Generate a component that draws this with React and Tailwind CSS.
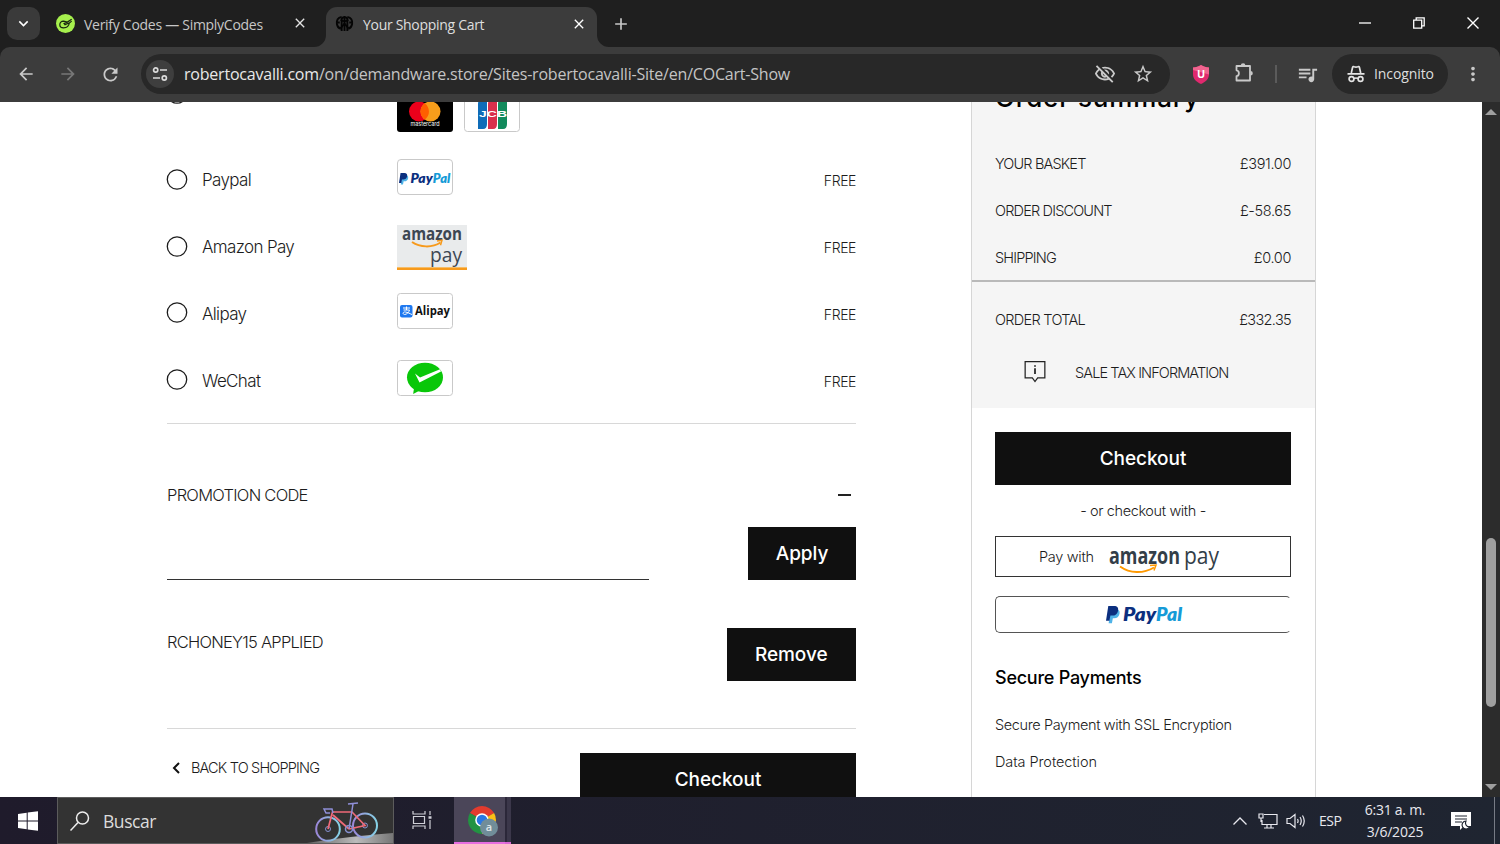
import {
    MdAdd,
    MdArrowBack,
    MdArrowForward,
    MdClose,
    MdKeyboardArrowDown,
    MdMoreVert,
    MdOutlineVisibilityOff,
    MdQueueMusic,
    MdRefresh,
    MdStarBorder,
} from "react-icons/md";

const PayPalMark = () => (
    <>
        <path d="M6 4h7c4 0 5.500 2 4.800 5.500-.9 4-3.500 5.500-7 5.500H9l-1.200 6H3.500z" fill="#4fb3e8" />
        <path d="M3 0h7.500c4.500 0 6.200 2.300 5.300 6-.9 4-3.600 5.700-7.600 5.700H5.800L4.500 18H0z" fill="#0b2f7f" />
    </>
);

const PayPalLogo = ({ className }) => (
    <svg viewBox="0 0 77 18" className={`overflow-visible ${className}`}>
        <g transform="scale(.76 .82)">
            <PayPalMark />
        </g>
        <text
            x="17"
            y="14.500"
            fontSize="18"
            fontWeight="800"
            fontStyle="italic"
            fontFamily="Lato, sans-serif"
            textLength="33"
            lengthAdjust="spacingAndGlyphs"
            fill="#0b2f7f"
        >
            Pay
        </text>
        <text
            x="50"
            y="14.500"
            fontSize="18"
            fontWeight="800"
            fontStyle="italic"
            fontFamily="Lato, sans-serif"
            textLength="26"
            lengthAdjust="spacingAndGlyphs"
            fill="#169bd7"
        >
            Pal
        </text>
    </svg>
);

const MastercardLogo = () => (
    <svg viewBox="0 0 56 36" className="h-9 w-14">
        <rect width="56" height="36" rx="3" fill="#000" />
        <circle cx="22" cy="15.500" r="10" fill="#eb001b" />
        <circle cx="33.500" cy="15.500" r="10" fill="#f79e1b" />
        <path d="M27.700 7.300a10 10 0 0 1 0 16.400 10 10 0 0 1 0-16.400z" fill="#ff5f00" />
        <text x="13.500" y="30" fontSize="5.500" fontFamily="Inter, sans-serif" textLength="29" lengthAdjust="spacingAndGlyphs" fill="#fff">
            mastercard
        </text>
    </svg>
);

const JcbLogo = () => (
    <svg viewBox="0 0 56 36" className="h-9 w-14">
        <rect x=".5" y=".5" width="55" height="35" rx="3" fill="#fff" stroke="#c9c9c9" />
        <path d="M14 8q0-5 5-5h4v25q0 5-4 5h-5z" fill="#0f6cb8" />
        <path d="M24 8q0-5 5-5h4v25q0 5-4 5h-5z" fill="#d9304c" />
        <path d="M34 8q0-5 5-5h4v25q0 5-4 5h-5z" fill="#128a5c" />
        <text x="15" y="21" fontSize="8.500" fontWeight="700" fontFamily="Liberation Sans, sans-serif" textLength="28" lengthAdjust="spacingAndGlyphs" fill="#fff">
            JCB
        </text>
    </svg>
);

const PayPalCard = () => (
    <div className="flex h-9 w-14 items-center justify-center rounded border border-[#c9c9c9] bg-white pt-1">
        <PayPalLogo className="h-[18px] w-[52px]" />
    </div>
);

const AmazonCard = () => (
    <svg viewBox="0 0 70 45" className="mt-1.5 h-[45px] w-[70px] overflow-visible">
        <rect width="70" height="45" fill="#e9ebec" />
        <rect y="42" width="70" height="1" fill="#f5bd68" />
        <rect y="43" width="70" height="2" fill="#f79a1c" />
        <text x="5" y="15" fontSize="18" fontWeight="700" fontFamily="Open Sans, sans-serif" textLength="60" lengthAdjust="spacingAndGlyphs" fill="#3d4753">
            amazon
        </text>
        <path d="M15 17c8 5.500 20 6 28.500.5" fill="none" stroke="#f79a1c" strokeWidth="2" />
        <path d="M40 16l5-.8-1.500 5" fill="none" stroke="#f79a1c" strokeWidth="1.500" />
        <text x="33" y="36.500" fontSize="20" fontFamily="Open Sans, sans-serif" fontWeight="500" textLength="32" lengthAdjust="spacingAndGlyphs" fill="#3d4753">
            pay
        </text>
    </svg>
);

const AlipayCard = () => (
    <svg viewBox="0 0 56 36" className="h-9 w-14 overflow-visible">
        <rect x=".5" y=".5" width="55" height="35" rx="3" fill="#fff" stroke="#c9c9c9" />
        <rect x="3" y="12" width="12.500" height="12.500" rx="2" fill="#1e78f0" />
        <path d="M6 15h7M9.500 13.500v3.500M6.500 17h6c-.5 2-2.500 4.500-5 4.500-2.500-.5-1.500-3 1-2.500 2 .3 4 1.500 6.500 2.500" fill="none" stroke="#fff" strokeWidth="1" />
        <text x="18" y="22" fontSize="13" fontWeight="700" fontFamily="Open Sans, sans-serif" textLength="35" lengthAdjust="spacingAndGlyphs" fill="#111">
            Alipay
        </text>
    </svg>
);

const WeChatCard = () => (
    <svg viewBox="0 0 56 36" className="h-9 w-14">
        <rect x=".5" y=".5" width="55" height="35" rx="3" fill="#fff" stroke="#c9c9c9" />
        <ellipse cx="28" cy="17.500" rx="18" ry="14.800" fill="#09c709" />
        <path d="M17 28l-.8 6 6.500-3.500z" fill="#09c709" />
        <path d="M18 13.500l5 4L43 9.300 44 11.500l-21.500 11z" fill="#fff" />
    </svg>
);

const payments = [
    { name: "Paypal", logo: <PayPalCard /> },
    { name: "Amazon Pay", logo: <AmazonCard /> },
    { name: "Alipay", logo: <AlipayCard /> },
    { name: "WeChat", logo: <WeChatCard /> },
];

const totals = [
    ["YOUR BASKET", "£391.00"],
    ["ORDER DISCOUNT", "£-58.65"],
    ["SHIPPING", "£0.00"],
];

const TabStrip = () => (
    <div className="flex h-[47px] shrink-0 bg-[#1f1f1f] text-[#c7c7c7]">
        <div className="ml-[7px] mt-[7px] flex h-[33px] w-[33px] items-center justify-center rounded-[10px] bg-[#3a3a3a]">
            <MdKeyboardArrowDown className="size-[19px] text-white" />
        </div>
        <div className="ml-4 flex h-[47px] w-[270px] items-center pb-px">
            <svg viewBox="0 0 20 20" className="size-[19px]">
                <circle cx="10" cy="10" r="10" fill="#a6f04d" />
                <path d="M16.500 5.500L12 8.500 8 7.500C5.500 7.500 4 9 4 11.200 4 13.200 5.500 14.500 8 14.500c3 0 5.500-1.500 6-5l2.500-2M12 8.500L8.500 10l1 1.300 4-1.800" fill="none" stroke="#182610" strokeWidth="1.300" />
            </svg>
            <span className="ml-[9px] w-[208px] whitespace-nowrap pt-0.5 text-[14px] tracking-[-0.28px]">
                Verify Codes — SimplyCodes
            </span>
            <MdClose className="size-4 text-[#e3e3e3]" />
        </div>
        <div className="relative mt-[7px] flex h-10 w-[271px] items-center rounded-t-[11px] bg-[#3c3c3c] pb-[7px]">
            <svg viewBox="0 0 12 12" className="absolute -left-3 bottom-0 size-3">
                <path d="M12 0A12 12 0 0 1 0 12h12z" fill="#3c3c3c" />
            </svg>
            <svg viewBox="0 0 12 12" className="absolute -right-3 bottom-0 size-3">
                <path d="M0 0a12 12 0 0 0 12 12H0z" fill="#3c3c3c" />
            </svg>
            <svg viewBox="0 0 20 20" className="ml-[9px] size-[19px]">
                <g fill="none" stroke="#050505" strokeWidth="2">
                    <path d="M7 3C3 4 1.500 7 2 10.500c.5 3 2 4.500 4 5M13 3c4 1 5.500 4 5 7.500-.5 3-2 4.500-4 5" />
                    <path d="M7 18V5q3-4 6 0v13M1 9h4M15 9h4M10 2v16" />
                    <path d="M6 6q4 3 8 0M6 15l4-5 4 5" />
                </g>
            </svg>
            <span className="ml-[9px] w-[208px] whitespace-nowrap pt-0.5 text-[14px] tracking-[-0.3px] text-[#dedede]">
                Your Shopping Cart
            </span>
            <MdClose className="size-4 text-white" />
        </div>
        <MdAdd className="ml-[14px] mt-[14px] size-5" />
        <div className="ml-auto mr-[21px] flex items-center gap-[42px] pb-px text-white">
            <svg viewBox="0 0 12 12" className="size-3">
                <path d="M0 6h12" stroke="currentColor" strokeWidth="1.300" />
            </svg>
            <svg viewBox="0 0 12 12" className="size-3" fill="none" stroke="currentColor" strokeWidth="1.300">
                <path d="M.7 3.200h8v8h-8zM3.200 3V.8h8v8H9" />
            </svg>
            <svg viewBox="0 0 12 12" className="size-3">
                <path d="M.5.5l11 11M11.500.5l-11 11" stroke="currentColor" strokeWidth="1.400" />
            </svg>
        </div>
    </div>
);

const Toolbar = () => (
    <div className="h-[55px] shrink-0 bg-[#1f1f1f]">
        <div className="flex h-[55px] items-center rounded-t-[10px] bg-[#3c3c3c] pb-px text-[#c9c9c9]">
            <MdArrowBack className="ml-4 size-5" />
            <MdArrowForward className="ml-[22px] size-5 text-[#777]" />
            <MdRefresh className="ml-[22px] size-[21px]" />
            <div className="ml-5 flex h-10 w-[1029px] items-center rounded-full bg-[#282828]">
                <div className="ml-[5px] flex size-7 items-center justify-center rounded-full bg-[#3e3e3e]">
                    <svg viewBox="0 0 16 16" className="size-4" fill="none" stroke="#dcdcdc" strokeWidth="1.700">
                        <circle cx="3.700" cy="4" r="2.100" />
                        <path d="M8 4h7M1 12h7" />
                        <circle cx="12.300" cy="12" r="2.100" />
                    </svg>
                </div>
                <p className="ml-[10px] w-[910px] whitespace-nowrap text-[16px] tracking-[-0.21px] text-[#c4c4c4]">
                    <span className="text-[#e8e8e8]">robertocavalli.com</span>
                    /on/demandware.store/Sites-robertocavalli-Site/en/COCart-Show
                </p>
                <MdOutlineVisibilityOff className="size-[22px]" />
                <MdStarBorder className="ml-4 size-[22px]" />
            </div>
            <svg viewBox="0 0 16 19" className="ml-[23px] h-[19px] w-4">
                <path d="M8 0c2.500 1.800 5 2.300 8 2.500v7c0 4.500-3.500 7.500-8 9.500-4.500-2-8-5-8-9.500v-7C3 2.300 5.500 1.800 8 0z" fill="#e0296e" />
                <path d="M8 0c2.500 1.800 5 2.300 8 2.500v7L0 5V2.500C3 2.300 5.500 1.800 8 0z" fill="#f0648f" />
                <text x="8" y="13" textAnchor="middle" fontSize="10.500" fontWeight="700" fontFamily="Inter, sans-serif" fill="#fff">
                    U
                </text>
            </svg>
            <svg viewBox="0 0 22 22" className="mb-1 ml-6 size-[22px]" fill="none" stroke="currentColor" strokeWidth="1.800">
                <path d="M3.500 5H17v14.500H3.500v-4.300c3.200-.4 3.200-5.500 0-5.900z" strokeLinejoin="round" />
                <path d="M7.800 4.500a2.300 2.300 0 0 1 4.600 0zM17.500 9.900a2.300 2.300 0 0 1 0 4.600z" fill="currentColor" stroke="none" />
            </svg>
            <div className="ml-5 h-[18px] w-[2px] bg-[#5b5b5b]" />
            <MdQueueMusic className="ml-[19px] size-[23px]" />
            <div className="ml-[13px] flex h-10 w-[116px] items-center rounded-full bg-[#282828] text-[#dedede]">
                <svg viewBox="0 0 18 18" className="ml-[15px] size-[18px]" fill="none" stroke="#e4e4e4" strokeWidth="1.700">
                    <path d="M4.300 8L5.600 2.300Q6 1.200 7.200 1.700q1.800.7 3.600 0 1.200-.5 1.600.6L13.700 8M.5 8.800h17" />
                    <circle cx="4.500" cy="14" r="2.400" />
                    <circle cx="13.500" cy="14" r="2.400" />
                    <path d="M6.800 13.500q2.200-1 4.400 0" />
                </svg>
                <span className="ml-[9px] pb-0.5 text-[14px] tracking-[-0.1px]">Incognito</span>
            </div>
            <MdMoreVert className="ml-[14px] size-[22px]" />
        </div>
    </div>
);

const Radio = ({ className = "" }) => (
    <svg viewBox="0 0 21 21" className={`size-[21px] shrink-0 ${className}`}>
        <circle cx="10" cy="10.500" r="9.700" fill="none" stroke="#1c1c1c" strokeWidth="1.300" />
    </svg>
);

const BlackButton = ({ children, className }) => (
    <button className={`flex h-[53px] items-center justify-center bg-[#101010] pt-[2px] text-[19px] font-medium tracking-[-0.05px] text-white ${className}`}>
        {children}
    </button>
);

const Cart = () => (
    <main className="ml-[167px] w-[689px] text-[#1c1c1c]">
        <div className="flex h-11 items-end overflow-hidden pb-[14px]">
            <Radio className="mb-[28px] overflow-visible" />
            <div className="ml-[209px] flex gap-[11px]">
                <MastercardLogo />
                <JcbLogo />
            </div>
        </div>
        {payments.map(({ name, logo }) => (
            <div key={name} className="flex h-[66.8px] items-center">
                <Radio className="overflow-visible" />
                <span className="ml-[14px] w-[195px] pt-[3px] text-[17px] font-light tracking-[-0.65px]">{name}</span>
                <div className="pb-1">{logo}</div>
                <span className="ml-auto pt-[3px] text-[14px] font-light tracking-[-0.4px]">FREE</span>
            </div>
        ))}
        <div className="mt-[9.5px] border-t border-[#d8d8d8]" />
        <div className="mt-[59.500px] flex h-6 items-center justify-between pr-[5px]">
            <h3 className="text-[16.5px] font-light tracking-[-0.73px]">PROMOTION CODE</h3>
            <span className="h-[2px] w-[13px] bg-[#222]" />
        </div>
        <div className="mt-5 flex items-end justify-between">
            <input className="h-[53px] w-[482px] border-b border-[#333] outline-none" />
            <BlackButton className="w-[108px]">Apply</BlackButton>
        </div>
        <div className="mt-[47.500px] flex justify-between">
            <p className="pt-[2px] text-[16.5px] font-light tracking-[-0.75px]">RCHONEY15 APPLIED</p>
            <BlackButton className="w-[129.5px]">Remove</BlackButton>
        </div>
        <div className="mt-[47.500px] border-t border-[#d8d8d8]" />
        <div className="mt-[23.500px] flex justify-between">
            <a className="flex h-[30px] items-center text-[14.5px] font-light tracking-[-0.82px]">
                <svg viewBox="0 0 8 12" className="ml-[5px] mr-[11px] h-3 w-2" fill="none" stroke="#111" strokeWidth="2">
                    <path d="M7 1L2 6l5 5" />
                </svg>
                BACK TO SHOPPING
            </a>
            <BlackButton className="w-[276px]">Checkout</BlackButton>
        </div>
    </main>
);

const OrderSummary = () => (
    <aside className="ml-[115px] h-[695px] w-[345px] border-x border-[#d6d6d6] text-[#1c1c1c]">
        <div className="h-[306px] bg-[#f5f5f5]">
            <div className="flex h-[38px] items-start px-[23px]">
                <h2 className="-mt-[22px] whitespace-nowrap text-[26px] leading-9 font-medium tracking-[0.85px] text-black">
                    Order summary
                </h2>
            </div>
            <div className="h-[142px] border-b-2 border-[#b9b9b9] text-[14.5px] font-light">
                {totals.map(([label, amount]) => (
                    <div key={label} className="flex h-[47px] items-center justify-between pl-[23px] pr-6">
                        <span className="tracking-[-0.83px]">{label}</span>
                        <span className="tracking-[-0.35px]">{amount}</span>
                    </div>
                ))}
            </div>
            <div className="mt-3.5 flex h-[47px] items-center justify-between pl-[23px] pr-6 text-[14.5px] font-light">
                <span className="tracking-[-0.7px]">ORDER TOTAL</span>
                <span className="tracking-[-0.65px]">£332.35</span>
            </div>
            <div className="mt-[5px] flex h-[47px] items-center pl-[52px]">
                <svg viewBox="0 0 22 23" className="size-[22px]" fill="none" stroke="#222" strokeWidth="1.300">
                    <path d="M.7.700h20.600v17h-7.500L11 21.500l-2.800-3.800H.7z" />
                    <path d="M11 7.500v6M11 4.500v1.500" strokeWidth="1.800" />
                </svg>
                <span className="ml-[29px] pt-0.5 text-[14.5px] font-light tracking-[-0.9px]">SALE TAX INFORMATION</span>
            </div>
        </div>
        <div className="flex flex-col pl-[23px] pr-6 pt-[23.500px] font-light">
            <BlackButton className="w-full">Checkout</BlackButton>
            <p className="mt-4 text-center text-[14.5px] leading-5 tracking-[-0.38px]">- or checkout with -</p>
            <div className="mt-[15.5px] flex h-[41px] items-center border border-[#333] pl-[43px]">
                <span className="w-[69.5px] text-[14.5px] tracking-[-0.3px]">Pay with</span>
                <svg viewBox="0 0 112 32" className="mt-1 h-8 w-28 overflow-visible">
                    <text x="0" y="21" fontSize="23" fontWeight="700" fontFamily="Open Sans, sans-serif" textLength="71" lengthAdjust="spacingAndGlyphs" fill="#333e48">
                        amazon
                    </text>
                    <text x="75" y="21" fontSize="23" fontWeight="400" fontFamily="Open Sans, sans-serif" textLength="35" lengthAdjust="spacingAndGlyphs" fill="#333e48">
                        pay
                    </text>
                    <path d="M11 23.500c10 7 23 7.500 34 1" fill="none" stroke="#f90" strokeWidth="2" />
                    <path d="M41 22.500l6-.5-2 5.500" fill="none" stroke="#f90" strokeWidth="1.500" />
                </svg>
            </div>
            <div className="mt-[19px] flex h-[37px] items-center justify-center rounded-[5px] border border-[#555] border-r-transparent pl-[2px]">
                <PayPalLogo className="h-[18px] w-[77px]" />
            </div>
            <h4 className="mt-[33px] text-[18px] leading-6 font-medium tracking-[-0.25px] text-black">Secure Payments</h4>
            <p className="mt-[25px] text-[14.5px] leading-5 tracking-[-0.38px]">Secure Payment with SSL Encryption</p>
            <p className="mt-[17px] text-[14.5px] leading-5 tracking-[-0.08px]">Data Protection</p>
        </div>
    </aside>
);

const Scrollbar = () => (
    <div className="ml-auto flex w-[18px] flex-col items-center justify-between bg-[#2c2c2c] py-[7px] text-[#9f9f9f]">
        <svg viewBox="0 0 12 6" className="h-1.5 w-3">
            <path d="M6 0l6 6H0z" fill="currentColor" />
        </svg>
        <div className="mt-[346px] h-[169px] w-[10px] rounded-full bg-[#9f9f9f]" />
        <svg viewBox="0 0 12 6" className="h-1.5 w-3">
            <path d="M6 6L0 0h12z" fill="currentColor" />
        </svg>
    </div>
);

const Bicycle = () => (
    <svg viewBox="0 0 94 45" className="h-[45px] w-[94px]" fill="none">
        <defs>
            <linearGradient id="hill">
                <stop stopColor="#555" />
                <stop offset=".6" stopColor="#bbb" />
                <stop offset="1" stopColor="#777" />
            </linearGradient>
            <linearGradient id="wheel">
                <stop stopColor="#9b87d8" />
                <stop offset="1" stopColor="#86d2e6" />
            </linearGradient>
        </defs>
        <path d="M2 46q40-7 92-11v11z" fill="url(#hill)" />
        <circle cx="29" cy="31" r="11.800" stroke="url(#wheel)" strokeWidth="2" />
        <circle cx="66" cy="27.500" r="12" stroke="url(#wheel)" strokeWidth="2" />
        <circle cx="29" cy="31" r="2.500" stroke="#8590d0" />
        <circle cx="66" cy="27.500" r="2.500" stroke="#8590d0" />
        <path d="M33.500 14L29 31M33.500 14h20M34 17l16 14M53 14l13 13.500L50 31" stroke="#f06a78" strokeWidth="1.700" />
        <path d="M50 31l4-25M49 6l10-1M34 15l-1-4h-8l2 4h4" stroke="#8f8fd8" strokeWidth="1.500" />
        <circle cx="50" cy="31" r="3.500" stroke="#8590d0" strokeWidth="1.500" />
    </svg>
);

const ChromeLogo = () => (
    <svg viewBox="0 0 32 32" className="ml-[14px] mt-[9px] size-8">
        <path d="M14 14L1.900 7A14 14 0 0 1 26.100 7z" fill="#e33b2e" />
        <path d="M14 14L26.100 7A14 14 0 0 1 14 28z" fill="#fbc116" />
        <path d="M14 14L1.900 7A14 14 0 0 0 14 28l6-10z" fill="#229342" />
        <circle cx="14" cy="14" r="6.800" fill="#fff" />
        <circle cx="14" cy="14" r="5.300" fill="#2a78e4" />
        <circle cx="21" cy="21.500" r="9" fill="#718d99" />
        <text x="21" y="25" textAnchor="middle" fontSize="11" fontWeight="600" fontFamily="Open Sans, sans-serif" fill="#dfe7ea">
            a
        </text>
    </svg>
);

const Taskbar = () => (
    <div className="flex h-[47px] shrink-0 bg-linear-to-r from-[#1f1b2b] to-[#1f2531] text-white">
        <div className="flex w-[57px] items-center pl-[18px]">
            <svg viewBox="0 0 20 20" className="size-5" fill="#fff">
                <path d="M0 3l8.700-1.200v7.700H0zM9.700 1.600L20 .2v9.300H9.700zM0 10.500h8.700v7.700L0 17zM9.700 10.500H20v9.300L9.700 18.400z" />
            </svg>
        </div>
        <div className="flex w-[337px] items-center overflow-hidden border border-[#5c5c5c] bg-[#333]">
            <svg viewBox="0 0 20 20" className="ml-3 size-5" fill="none" stroke="#eee" strokeWidth="1.500">
                <circle cx="12.500" cy="7" r="6" />
                <path d="M8 11.500L.5 19.500" />
            </svg>
            <span className="ml-[13px] pt-0.5 text-[17.5px] tracking-[-0.45px] text-[#dcdcdc]">Buscar</span>
            <div className="ml-auto">
                <Bicycle />
            </div>
        </div>
        <svg viewBox="0 0 20 18" className="ml-[18px] mt-[14px] h-[18px] w-5" fill="none" stroke="#d0d0d8" strokeWidth="1.200">
            <path d="M1 0v3h12V0M1 18v-3h12v3M1.500 5.500h11v7h-11zM18 0v4M18 9v9" />
            <path d="M16.500 6.500h3" strokeWidth="2.500" />
        </svg>
        <div className="ml-[22px] flex w-[51px] items-start border-b-2 border-[#e66ee0] bg-[#4b4659]">
            <ChromeLogo />
        </div>
        <div className="w-0.5 border-b-2 border-[#d868d4] bg-[#2b2739]" />
        <div className="w-[4px] border-b-2 border-[#d868d4] bg-[#3b374a]" />
        <div className="ml-auto flex items-center text-[#e8e8ee]">
            <svg viewBox="0 0 14 8" className="h-2 w-[14px]" fill="none" stroke="currentColor" strokeWidth="1.300">
                <path d="M.5 7.500L7 1l6.500 6.500" />
            </svg>
            <svg viewBox="0 0 20 16" className="ml-[11px] h-4 w-5" fill="none" stroke="currentColor" strokeWidth="1.200">
                <path d="M6 1.500h13v10H4V7M9 12v3M13 12v3M6 15h10M1 1h4v4H1zM3 5v4" />
            </svg>
            <svg viewBox="0 0 20 16" className="ml-2 h-4 w-5" fill="none" stroke="currentColor" strokeWidth="1.200">
                <path d="M1 5.500h3l5-4v13l-5-4H1zM11.500 6q1.200 2 0 4M14 4q2.500 4 0 8M16.500 2.500q3.500 5.500 0 11" />
            </svg>
            <span className="ml-[13px] w-[24px] text-[14px] tracking-[-0.45px]">ESP</span>
            <div className="ml-[18px] w-[68px] text-center text-[14px] leading-[22px] tracking-[-0.25px] whitespace-nowrap">
                <p>6:31 a. m.</p>
                <p>3/6/2025</p>
            </div>
            <svg viewBox="0 0 20 20" className="ml-[22px] mr-[23px] size-5">
                <path d="M0 1h20v14h-7l-4 4v-4H0z" fill="#fff" />
                <path d="M4 5h12M4 8h12M4 11h7" stroke="#1f2531" strokeWidth="1.200" />
                <path d="M15 10a4 4 0 1 0 3.500 6 4 4 0 0 1-3.500-6z" fill="#fff" stroke="#1f2531" strokeWidth="1.200" />
            </svg>
            <div className="mr-[5px] h-[47px] w-px bg-[#777b85]" />
        </div>
    </div>
);

export default function App() {
    return (
        <div className="flex h-[844px] w-[1500px] flex-col overflow-hidden bg-white font-['Open_Sans','Noto_Sans',sans-serif]">
            <TabStrip />
            <Toolbar />
            <div className="flex h-[695px] shrink-0 overflow-hidden font-[Inter,sans-serif]">
                <Cart />
                <OrderSummary />
                <Scrollbar />
            </div>
            <Taskbar />
        </div>
    );
}
